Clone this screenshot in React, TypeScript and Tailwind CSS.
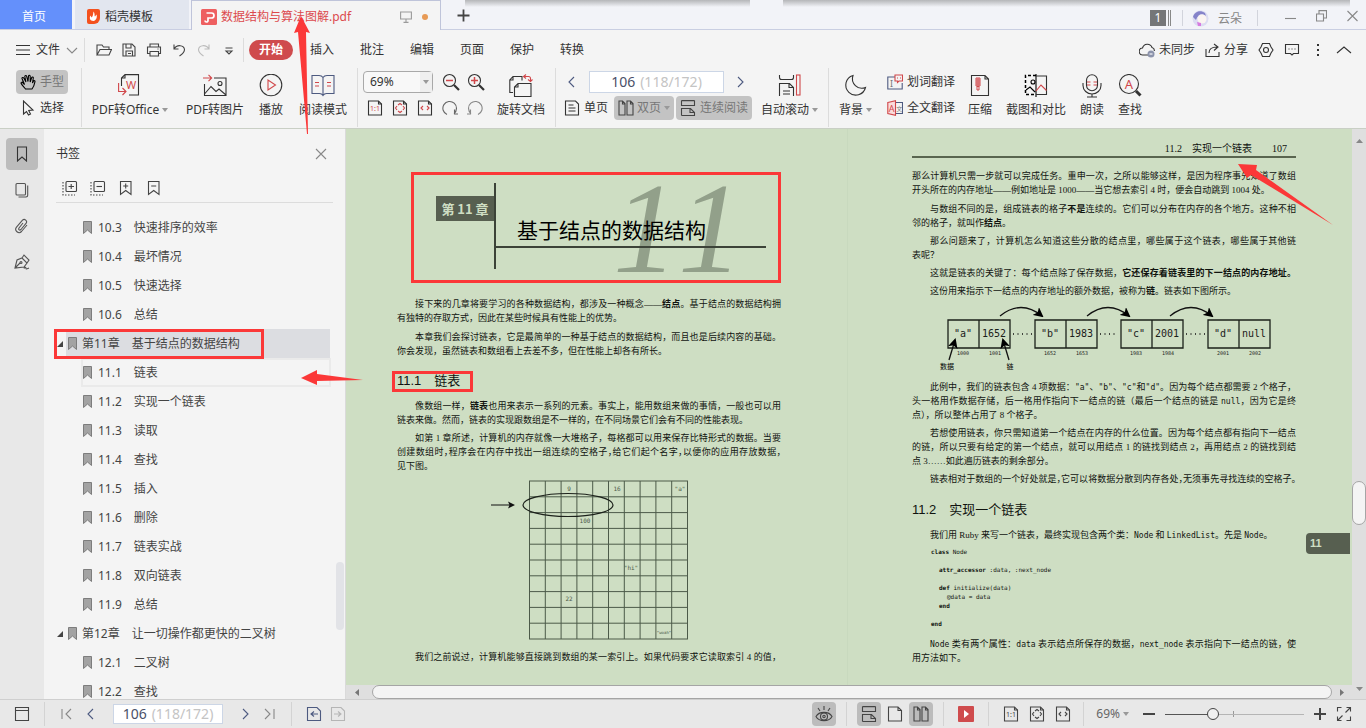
import type { ReactNode } from "react";

type IconProps = { w?: number; h?: number; className?: string; children: ReactNode };

function Icon({ w = 16, h = 16, className = "", children }: IconProps) {
  return (
    <svg
      width={w}
      height={h}
      viewBox={`0 0 ${w} ${h}`}
      fill="none"
      stroke="currentColor"
      strokeWidth="1.1"
      className={`shrink-0 ${className}`}
      aria-hidden="true"
    >
      {children}
    </svg>
  );
}

const RED = "#d0474a";

const Caret = () => (
  <svg width="6" height="4" viewBox="0 0 6 4" className="ml-[3px] shrink-0" aria-hidden="true">
    <path d="M0 0h6L3 4z" fill="#999" />
  </svg>
);

const Chevron = ({ dir }: { dir: "left" | "right" | "up" | "down" }) => {
  const d = {
    left: "M10 3L5 8l5 5",
    right: "M6 3l5 5-5 5",
    up: "M1 11l7-6 7 6",
    down: "M3 6l5 5 5-5",
  }[dir];
  return (
    <Icon>
      <path d={d} />
    </Icon>
  );
};

const FitActual = ({ color = "currentColor" }: { color?: string }) => (
  <Icon>
    <path d="M1.500 1h10l3 3v11h-13z" />
    <path d="M11.500 1v3h3" />
    <text x="8" y="11" fontSize="7" textAnchor="middle" fill={color} stroke="none">
      1:1
    </text>
  </Icon>
);

const FitPage = ({ color = "currentColor" }: { color?: string }) => (
  <Icon>
    <path d="M1.500 1h10l3 3v11h-13z" />
    <path d="M11.500 1v3h3" />
    <path d="M6 5l2-1.500 2 1.500M6 11l2 1.500 2-1.500M5 6L3.500 8 5 10M11 6l1.500 2-1.500 2" stroke={color} />
  </Icon>
);

const FitWidth = ({ color = "currentColor" }: { color?: string }) => (
  <Icon>
    <path d="M1.500 1h10l3 3v11h-13z" />
    <path d="M11.500 1v3h3" />
    <path d="M6 6L4 8l2 2M10 6l2 2-2 2" stroke={color} />
  </Icon>
);

const Continuous = () => (
  <Icon>
    <path d="M1.500 .5v5h13v-5M1.500 .6h13M1.500 15.400V8.500h9l4 4v3h-13M10 8.500v4h4" />
  </Icon>
);

const TwoPages = () => (
  <Icon>
    <path d="M1 1h3.500L7 3.500V15H1zM9 1h3.500L15 3.500V15H9zM4.500 1v3H7M12.500 1v3H15" />
  </Icon>
);

const BookmarkGlyph = () => (
  <svg width="9" height="13" viewBox="0 0 9 13" className="shrink-0" aria-hidden="true">
    <path d="M.5 .5h8v12L4.500 9l-4 3.500z" fill="#a3a3a3" stroke="#7d7d7d" />
  </svg>
);

/* ---------- title bar ---------- */

function TitleBar() {
  return (
    <header className="relative flex h-[30px] shrink-0 border-b border-[#c9cee2] bg-[#f2f3f8]">
      <div className="absolute left-[465px] top-0 h-[7px] w-[285px] bg-linear-to-b from-[#b5b6b9] to-[#f2f3f8]" />
      <div className="absolute left-[783px] right-4 top-0 h-[7px] bg-linear-to-b from-[#b5b6b9] to-[#f2f3f8]" />
      <button className="w-18 bg-[#6490fb] pr-1 pt-1 text-white">首页</button>
      <button className="ml-[3px] flex w-[114px] items-center bg-[#e2e6ef] pl-3 pt-1">
        <svg width="13" height="15" viewBox="0 0 13 15" aria-hidden="true">
          <path d="M2 0h9a2 2 0 0 1 2 2v7a6 6 0 0 1-6 6H2a2 2 0 0 1-2-2V2a2 2 0 0 1 2-2z" fill="#f4511e" />
          <path d="M6.500 2.500c2 3 .5 4 1.500 5l1.500-2c1 3-.5 6-3 6.500C3 12 2 9 3.500 6.500l1 2c1.500-1 1.500-3 2-6z" fill="#fff" />
        </svg>
        <span className="ml-[5px]">稻壳模板</span>
      </button>
      <div className="-mb-px ml-0.5 flex w-[250px] items-center border-x border-t border-[#bfc4da] bg-[#f4f4f4] pl-[9px] pt-0.5 text-[#dc4a4d]">
        <svg width="16" height="16" viewBox="0 0 16 16" aria-hidden="true">
          <rect width="16" height="16" rx="1.500" fill="#ee5f60" />
          <path d="M5.500 4h5a2.500 2.500 0 0 1 0 5H7v2.500a1.500 1.500 0 1 1-3 0" fill="none" stroke="#fff" strokeWidth="1.700" />
        </svg>
        <span className="ml-1">数据结构与算法图解.pdf</span>
        <Icon w={12} h={12} className="ml-auto text-[#9a9a9a]">
          <path d="M.6 1h10.800v7H.6zM6 8v3M3.500 11.400h5" />
        </Icon>
        <span className="ml-2.5 mr-3 size-[6px] rounded-full bg-[#e79a55]" />
      </div>
      <button aria-label="新建" className="ml-4 pt-0.5 text-[#444]">
        <Icon w={13} h={13}>
          <path d="M6.500 .5v12M.5 6.500h12" strokeWidth="1.800" />
        </Icon>
      </button>
      <div className="ml-auto mt-2 flex h-5 items-center text-[#888]">
        <span className="flex size-4 items-center justify-center bg-[#757678] text-white">1</span>
        <span className="ml-0.5 h-4 w-[3px] border-x border-[#888]" />
        <span className="ml-[11px] h-4 w-px bg-[#d2d4dc]" />
        <svg width="17" height="17" viewBox="0 0 17 17" className="ml-[9px]" aria-hidden="true">
          <circle cx="8.500" cy="8.500" r="8" fill="#dcdcf2" />
          <path d="M1 7c1-5 7-8 12-4l1 3c-4-3-8-2-10 4z" fill="#8583c9" />
          <circle cx="10" cy="9" r="4.500" fill="#fbf4f1" />
          <path d="M5 12l4 1v3H6z" fill="#d77be0" />
        </svg>
        <span className="ml-[9px] pt-0.5">云朵</span>
        <span className="ml-[15px] h-4 w-px bg-[#d2d4dc]" />
        <button aria-label="最小化" className="ml-[27px]">
          <Icon w={11} h={12}><path d="M0 6.500h11" /></Icon>
        </button>
        <button aria-label="还原" className="ml-5 pb-1">
          <Icon w={11} h={12}><path d="M.5 4h7v7h-7zM3 4V.6h7.500V8H7.500" /></Icon>
        </button>
        <button aria-label="关闭" className="ml-5 mr-2 pb-1">
          <Icon w={11} h={12}><path d="M.5 1l10 10M10.500 1l-10 10" /></Icon>
        </button>
      </div>
    </header>
  );
}

/* ---------- menu row ---------- */

const quickIcons: { name: string; icon: ReactNode }[] = [
  { name: "打开", icon: <path d="M1 13V3h5l1.500 2H13v2.500M1 13h12l2.500-5.500H4z" /> },
  { name: "保存", icon: <path d="M2 2h9l3 3v9H2zM5 2v4h5V2M5 14V9h6.500v5M7 11.500h3" /> },
  { name: "打印", icon: <path d="M4 5V2h8.500v3M4 11.500H1.500V5h13v6.500H12.500M4 9.500h8.500V14H4zM11.500 7h1" /> },
  { name: "撤销", icon: <path d="M3 2.500v4.500h4.500M3 7c3-5 10-4 10.500.5 0 3-2 4.500-5 6.500" /> },
  { name: "恢复", icon: <path d="M13 2.500v4.500H8.500M13 7C10 2 3 3 2.500 7.500c0 3 2 4.500 5 6.500" stroke="#bbb" /> },
  { name: "更多", icon: <path d="M4.500 6h7M5 9l3 3 3-3z" /> },
];

const menus = ["插入", "批注", "编辑", "页面", "保护", "转换"];

function MenuRow() {
  return (
    <nav className="flex h-9 shrink-0 items-center pl-4 pt-[3px] text-[#333]">
      <button className="flex items-center">
        <Icon w={14} h={12}><path d="M0 1.500h14M0 6h14M0 10.500h14" /></Icon>
        <span className="ml-1.5">文件</span>
        <span className="ml-1 text-[#888]"><Chevron dir="down" /></span>
      </button>
      <span className="mx-1 h-6 w-px bg-[#dcdcdc]" />
      <div className="ml-0.5 flex">
        {quickIcons.map((q) => (
          <button key={q.name} aria-label={q.name} className="flex w-[25px] justify-center text-[#444]">
            <Icon>{q.icon}</Icon>
          </button>
        ))}
      </div>
      <span className="ml-0.5 mr-1 h-6 w-px bg-[#dcdcdc]" />
      <button className="ml-px h-5 w-11 rounded-full bg-[#cf4b4d] font-bold text-white">开始</button>
      <div className="ml-1 flex">
        {menus.map((m) => (
          <button key={m} className="w-[50px]">{m}</button>
        ))}
      </div>
      <div className="ml-auto flex items-center pr-[14px]">
        <button className="flex items-center">
          <Icon>
            <path d="M9 13H4a3.500 3.500 0 0 1-.5-7 5 5 0 0 1 9.500-.5c2 .5 2.500 2 2.300 3.500" />
            <circle cx="12" cy="12" r="3.500" fill="#8c93ab" stroke="none" />
            <path d="M10.500 12h3" stroke="#fff" />
          </Icon>
          <span className="ml-1">未同步</span>
        </button>
        <button className="ml-2.5 flex items-center">
          <Icon><path d="M1 7v7.500h13V10M4 11c0-4 3-6 8-6M9 2l4 3-4 3.500" /></Icon>
          <span className="ml-[3px]">分享</span>
        </button>
        <button aria-label="设置" className="ml-2.5">
          <Icon><path d="M4.500 1.500h7L13 5l2 3-2 3-1.500 3.500h-7L3 11 1 8l2-3z" /><circle cx="8" cy="8" r="2.500" /></Icon>
        </button>
        <button aria-label="反馈" className="ml-2.5">
          <Icon><path d="M1.500 2.500h13v9h-5L8 13l-1.500-1.500h-5z" /><path d="M4.500 7h1M7.500 7h1M10.500 7h1" /></Icon>
        </button>
        <button aria-label="更多选项" className="ml-2.5">
          <Icon><path d="M8 2v2M8 7v2M8 12v2" strokeWidth="2" /></Icon>
        </button>
        <button aria-label="收起" className="ml-2.5"><Chevron dir="up" /></button>
      </div>
    </nav>
  );
}

/* ---------- ribbon ---------- */

function BigButton({ label, icon, className, caret }: { label: string; icon: ReactNode; className: string; caret?: boolean }) {
  return (
    <button className={`mt-2 flex h-12 shrink-0 flex-col items-center whitespace-nowrap ${className}`}>
      <Icon w={24} h={24}>{icon}</Icon>
      <span className="mt-1 flex items-center leading-4">
        {label}
        {caret && <Caret />}
      </span>
    </button>
  );
}

const Rule = ({ className }: { className: string }) => <span className={`mt-0.5 h-[59px] w-px shrink-0 bg-[#dcdcdc] ${className}`} />;

function PageNumber({ className, id }: { className: string; id: string }) {
  return (
    <label htmlFor={id} className={`flex items-center justify-center border border-[#ccd6e6] bg-white text-sm text-[#c4c4c4] ${className}`}>
      <input id={id} defaultValue="106" aria-label="页码" className="mr-1 w-[25px] text-[#4a5068] outline-none" />
      (118/172)
    </label>
  );
}

function Ribbon() {
  return (
    <section className="flex h-[63px] shrink-0 items-start border-b border-[#c9cfc5] pl-4 text-[#333]">
      <div className="mt-1 flex w-[52px] flex-col gap-0.5">
        <button className="flex h-6 items-center gap-1 rounded bg-[#c3c3c3] pl-1 text-[#777]">
          <Icon className="text-black">
            <path d="M5.500 15c-1-1.500-4-4-4.500-6 0-1 1.500-1.200 2 0L4.500 10.500 2 4.500c-.3-1 1.300-1.500 1.800-.5L6 8 4.800 2.500c0-1.200 1.500-1.300 1.800-.3L8 7.500l.5-5.500c.2-1 1.700-.9 1.700.2L10.200 8l1.500-4.500c.5-1 1.800-.5 1.600.5L12.500 9l1-2c.6-.8 1.700-.3 1.500.6-.5 2.500-1 5-3 7.400z" />
          </Icon>
          手型
        </button>
        <button className="flex h-6 items-center gap-1 pl-1">
          <Icon><path d="M3.500 1v13l3-2.500L8.500 15l2-1-1.800-3.500L13 10z" /></Icon>
          选择
        </button>
      </div>
      <Rule className="ml-[13px]" />
      <BigButton
        label="PDF转Office"
        caret
        className="ml-2.5 w-19"
        icon={
          <>
            <path d="M3.500 12V4L7 .6h13.500V21H11M7 .6V4H3.500" />
            <path d="M.6 9v8.500H8M4.500 14L8 17.500 4.500 21" stroke={RED} />
            <text x="13" y="15" fontSize="11" textAnchor="middle" fill={RED} stroke="none">W</text>
          </>
        }
      />
      <BigButton
        label="PDF转图片"
        className="ml-[18px] w-[58px]"
        icon={
          <>
            <path d="M11 4h12v17.500H1.500V10M1.500 20L8 12.500l5 5 3-2.500 7 6" />
            <circle cx="17" cy="9.500" r="2" />
            <path d="M0 4h8.500M5.500 .8L8.700 4 5.500 7.200" stroke={RED} />
          </>
        }
      />
      <BigButton
        label="播放"
        className="ml-[15px] w-6"
        icon={
          <>
            <circle cx="12" cy="11" r="10.800" />
            <path d="M9 6v10l7.500-5z" stroke={RED} />
          </>
        }
      />
      <BigButton
        label="阅读模式"
        className="ml-4 w-12"
        icon={
          <>
            <path d="M12 3.500C11 2 9 1.500 8 1.500H1v18h7.500c1.500 0 2.500.5 3.500 2 1-1.500 2-2 3.500-2H23v-18h-7c-1 0-3 .5-4 2zM12 3.500v18" stroke="#4d5a80" />
            <path d="M4 8.500h4M4 12h4M16 8.500h4M16 12h4" stroke={RED} />
          </>
        }
      />
      <Rule className="ml-2.5" />
      <div className="ml-[5px] mt-[5px] w-[122px]">
        <div className="flex items-center">
          <div className="relative">
            <select aria-label="缩放" className="h-[22px] w-[70px] appearance-none rounded border border-[#a9a9a9] bg-[#f8f8f8] pl-1.5 text-[#333]">
              <option>69%</option>
            </select>
            <span className="pointer-events-none absolute inset-y-px right-px flex w-3 items-center bg-[#efefef]"><Caret /></span>
          </div>
          <button aria-label="缩小" className="ml-[9px]">
            <Icon w={18} h={18}>
              <circle cx="7.500" cy="7.500" r="6" /><path d="M12 12l5 5" strokeWidth="2.200" /><path d="M4 7.500h7" stroke={RED} strokeWidth="1.500" />
            </Icon>
          </button>
          <button aria-label="放大" className="ml-[7px]">
            <Icon w={18} h={18}>
              <circle cx="7.500" cy="7.500" r="6" /><path d="M12 12l5 5" strokeWidth="2.200" /><path d="M4 7.500h7M7.500 4v7" stroke={RED} strokeWidth="1.500" />
            </Icon>
          </button>
        </div>
        <div className="ml-1 mt-[7px] flex gap-[9px]">
          <button aria-label="实际大小"><FitActual color={RED} /></button>
          <button aria-label="适合页面"><FitPage color={RED} /></button>
          <button aria-label="适合宽度"><FitWidth color={RED} /></button>
          <button aria-label="顺时针旋转" className="text-[#666]"><Icon><path d="M5 14.500A6.800 6.800 0 1 1 12 13.500M12.500 9.500v4.500h3.500" /></Icon></button>
          <button aria-label="逆时针旋转" className="text-[#888]"><Icon><path d="M11 14.500A6.800 6.800 0 1 0 4 13.500M3.500 9.500v4.500H0" /></Icon></button>
        </div>
      </div>
      <BigButton
        label="旋转文档"
        className="ml-3 w-12"
        icon={
          <>
            <path d="M4 18.500H.8V6L4 2.500h9V6.500M4 2.500V6H.8" />
            <path d="M5.500 22.500h16.500V9.500H9L5.500 13zM9 9.500V13H5.500" />
            <path d="M15 2.500h4.500c1.500 0 2 1 2 2v3M17 .5l-2.500 2L17 4.500M19 5.500l2.500 2 2-2" stroke={RED} />
          </>
        }
      />
      <Rule className="ml-2.5" />
      <div className="ml-2 mt-[5px] w-[188px]">
        <div className="flex items-center text-[#4d5a80]">
          <button aria-label="上一页"><Chevron dir="left" /></button>
          <PageNumber id="page-top" className="ml-[9px] h-[22px] w-[135px]" />
          <button aria-label="下一页" className="ml-2"><Chevron dir="right" /></button>
        </div>
        <div className="mt-[3px] flex h-6 items-center">
          <button className="flex h-6 items-center gap-1 whitespace-nowrap">
            <Icon><path d="M1.500 1h10l3 3v11h-13zM4.500 5h5M4.500 8h7M4.500 11h7" /></Icon>
            单页
          </button>
          <button className="ml-1.5 flex h-6 shrink-0 items-center rounded bg-[#c3c3c3] px-1 text-[#777]">
            <span className="mr-[3px] text-[#444]"><TwoPages /></span>
            双页
            <Caret />
          </button>
          <button className="ml-0.5 flex h-6 shrink-0 items-center rounded bg-[#c3c3c3] px-1 text-[#777]">
            <span className="mr-1 text-[#444]"><Continuous /></span>
            连续阅读
          </button>
        </div>
      </div>
      <BigButton
        label="自动滚动"
        caret
        className="ml-[9px] w-[57px]"
        icon={
          <>
            <path d="M1.500 1v2.500c0 1.500 1 2 2 2h10c1 0 2-.5 2-2V1M1.500 22V9.500h10l4 4V22M11 9.500v4h4.500M5 17h7M5 20h7" />
            <rect x="18.500" y="1" width="3.500" height="20" stroke={RED} />
          </>
        }
      />
      <Rule className="ml-2.5" />
      <BigButton label="背景" caret className="ml-2.5 w-[33px]" icon={<path d="M9 1.500A10 10 0 1 0 21.500 13.500 9.500 9.500 0 0 1 9 1.500z" />} />
      <div className="ml-[15px] mt-1 flex flex-col gap-0.5 whitespace-nowrap">
        <button className="flex h-6 items-center gap-1">
          <Icon>
            <path d="M8 3H.8v12h14.400V9" stroke="#4d5a80" />
            <text x="4.500" y="12.500" fontSize="9" textAnchor="middle" fill="#777" stroke="none">I</text>
            <path d="M8 1h7.500v6H12l-1.500 1.500V7H8zM10 4h1M13 4h1" stroke={RED} />
          </Icon>
          划词翻译
        </button>
        <button className="flex h-6 items-center gap-1">
          <Icon>
            <path d="M9 2.500h6.500v11H9" stroke="#4d5a80" />
            <path d="M.8 2.500L8.500 .8v14.500L.8 13.500z" stroke={RED} fill="#fbdcdc" />
            <text x="4.700" y="11.500" fontSize="9" textAnchor="middle" fill={RED} stroke="none">A</text>
            <text x="12.300" y="11" fontSize="6" textAnchor="middle" fill="#777" stroke="none">文</text>
          </Icon>
          全文翻译
        </button>
      </div>
      <BigButton
        label="压缩"
        className="ml-[13px] w-6"
        icon={
          <>
            <path d="M3.500 1.500h13.500L20.500 5v16.500h-17zM17 1.500V5h3.500" />
            <path d="M8 4h4v8H8zM8 6h4M8 8h4M8 10h4M10 4v8M9 12.500h2V16H9z" stroke={RED} strokeWidth="1" />
          </>
        }
      />
      <BigButton
        label="截图和对比"
        className="ml-[14px] w-15"
        icon={
          <>
            <path d="M12 1.500H1.500v19H12" strokeDasharray="3 2" stroke="#000" strokeWidth="1.500" />
            <path d="M2 16l4-3 5 5M12 0v23" stroke="#000" />
            <circle cx="9" cy="8" r="2" stroke="#000" />
            <path d="M12 2h10.500v18.500H12" />
            <path d="M12 17l5-6 5.500 5.500" stroke={RED} />
          </>
        }
      />
      <BigButton
        label="朗读"
        className="ml-[14px] w-6"
        icon={
          <>
            <rect x="6.500" y=".8" width="11" height="16" rx="5.500" />
            <path d="M3 9v2.500a9 8.500 0 0 0 18 0V9M12 20v3M7 23h10" />
            <path d="M7 8h3.500M7 11h3.500M13.500 8H17M13.500 11H17" stroke={RED} />
          </>
        }
      />
      <BigButton
        label="查找"
        className="ml-[14px] w-6"
        icon={
          <>
            <circle cx="11" cy="10" r="9.500" />
            <path d="M18 17l4.500 4.500" strokeWidth="3" />
            <text x="11" y="14.500" fontSize="13" textAnchor="middle" fill={RED} stroke="none">A</text>
          </>
        }
      />
    </section>
  );
}

/* ---------- bookmarks ---------- */

const bookmarks = [
  { text: "10.3　快速排序的效率" },
  { text: "10.4　最坏情况" },
  { text: "10.5　快速选择" },
  { text: "10.6　总结" },
  { text: "第11章　基于结点的数据结构", chapter: true, selected: true },
  { text: "11.1　链表", hover: true },
  { text: "11.2　实现一个链表" },
  { text: "11.3　读取" },
  { text: "11.4　查找" },
  { text: "11.5　插入" },
  { text: "11.6　删除" },
  { text: "11.7　链表实战" },
  { text: "11.8　双向链表" },
  { text: "11.9　总结" },
  { text: "第12章　让一切操作都更快的二叉树", chapter: true },
  { text: "12.1　二叉树" },
  { text: "12.2　查找" },
];

function Sidebar() {
  return (
    <>
      <aside className="flex w-11 shrink-0 flex-col items-center bg-[#e8e8e8] pt-[9px] text-[#555]">
        <button aria-label="书签" className="flex size-8 items-center justify-center rounded bg-[#bcbcbc] text-[#333]">
          <Icon><path d="M3.500 1h9v14L8 11l-4.500 4z" /></Icon>
        </button>
        <button aria-label="缩略图" className="flex h-9 items-center pt-1">
          <Icon><rect x="2" y="1.500" width="9.500" height="11.500" rx="1" /><path d="M4.500 15H12c1 0 1.700-.7 1.700-1.700V3.500" /></Icon>
        </button>
        <button aria-label="附件" className="flex h-9 items-center pt-1">
          <Icon><path d="M13 7l-5.500 6.500a3.300 3.300 0 0 1-5-4.300L8.500 2.200a2.400 2.400 0 0 1 3.700 3L7 11.500c-1.300 1.300-3 .2-2-1.500L9 5" /></Icon>
        </button>
        <button aria-label="签名" className="flex h-9 items-center pt-1">
          <Icon><path d="M1 14l2-8 5-2 5 5-3 4zM8 4l2-3 5 5-2 3M1 14l5-5M10 14.500c1-2 2-1 2 0s2 0 3-.5" /><circle cx="7" cy="8.500" r="1" /></Icon>
        </button>
      </aside>
      <section className="relative w-[302px] shrink-0 overflow-hidden border-r border-[#dadada] bg-[#f4f4f4]">
        <div className="flex h-12 items-center justify-between pl-3 pr-[18px] pt-px text-[#333]">
          <h2>书签</h2>
          <button aria-label="关闭书签" className="text-[#888]">
            <Icon w={12} h={12}><path d="M1 1l10 10M11 1L1 11" /></Icon>
          </button>
        </div>
        <div className="mx-3 flex h-[26px] items-start gap-3 border-b border-[#dcdcdc] pl-1.5 pt-[3px] text-[#444]">
          <button aria-label="展开"><Icon><path d="M1 2v13h12" strokeDasharray="1.500 1.500" /><rect x="4" y="1.500" width="10.500" height="10" rx="1" /><path d="M6.500 6.500h5.500M9.200 4v5" /></Icon></button>
          <button aria-label="折叠"><Icon><path d="M1 2v13h12" strokeDasharray="1.500 1.500" /><rect x="4" y="1.500" width="10.500" height="10" rx="1" /><path d="M6.500 6.500h5.500" /></Icon></button>
          <button aria-label="添加书签"><Icon><path d="M2.500 1.500h10.500v13L7.700 10.500 2.500 14.500zM5.200 6h5M7.700 3.500v5" /></Icon></button>
          <button aria-label="删除书签"><Icon><path d="M2.500 1.500h10.500v13L7.700 10.500 2.500 14.500zM5.200 6h5" /></Icon></button>
        </div>
        <ul className="mt-2.5 text-[#444]">
          {bookmarks.map((b) =>
            b.chapter ? (
              <li key={b.text} className="relative flex h-[29px] items-center pl-[13px] pr-[15px]">
                <svg width="6" height="6" viewBox="0 0 6 6" className="shrink-0" aria-hidden="true"><path d="M6 0v6H0z" fill="#444" /></svg>
                <a href="#chapter" className={`ml-[3px] flex h-full flex-1 items-center gap-[5px] pl-0.5 ${b.selected ? "bg-[#dcdde1]" : ""}`}>
                  <BookmarkGlyph />
                  {b.text}
                </a>
                {b.selected && <span className="absolute left-2.5 top-0 h-[30px] w-[210px] border-3 border-[#fb3838]" />}
              </li>
            ) : (
              <li key={b.text} className={`ml-[37px] mr-3.5 h-[29px] border-2 ${b.hover ? "border-[#eaeaea]" : "border-transparent"}`}>
                <a href="#section" className="flex h-full items-center gap-1.5">
                  <BookmarkGlyph />
                  {b.text}
                </a>
              </li>
            ),
          )}
        </ul>
        <div className="absolute right-px top-[433px] h-[68px] w-2 rounded-full bg-[#e2e3e7]" />
      </section>
    </>
  );
}

/* ---------- document pages ---------- */

// full: the line runs to the right margin; tight: half-width punctuation
function Line({ children, full, tight, indent }: { children: ReactNode; full?: boolean; tight?: boolean; indent?: boolean }) {
  return (
    <span
      className={`block whitespace-nowrap ${indent ? "pl-[18px]" : ""} ${full ? "[text-align-last:justify]" : ""} ${tight ? "[font-feature-settings:'halt']" : ""}`}
    >
      {children}
    </span>
  );
}

const Code = ({ children }: { children: ReactNode }) => (
  <code className="font-['DejaVu_Sans_Mono',monospace] text-[8px] leading-none">{children}</code>
);

function MemoryGrid() {
  const ticks = Array.from({ length: 11 }, (_, i) => i * 15.8 + 40.5);
  const cells = [
    { x: 80, y: 11, t: "9" },
    { x: 128, y: 11, t: "16" },
    { x: 191, y: 11, t: '"a"' },
    { x: 96, y: 43, t: "100" },
    { x: 142, y: 90, t: '"hi"' },
    { x: 80, y: 121, t: "22" },
    { x: 175, y: 154, t: '"woah"' },
  ];
  return (
    <svg width="201" height="160" viewBox="0 0 201 160" className="ml-[92px] mt-[7px]" role="img" aria-label="内存格子">
      <g stroke="#4c5a49" strokeWidth="1">
        {ticks.map((t) => (
          <path key={t} d={`M${t} 1V159M40 ${t - 39.5}H199`} />
        ))}
      </g>
      <ellipse cx="79" cy="25" rx="45" ry="11.500" fill="none" stroke="#1c211b" strokeWidth="1.200" />
      <path d="M2 25h20" stroke="#111" />
      <path d="M26 25l-7-3.500 1.500 3.500-1.500 3.500z" fill="#111" />
      {cells.map((c) => (
        <text key={c.t} x={c.x} y={c.y} textAnchor="middle" fill="#4c5a49" className={`font-['DejaVu_Sans_Mono',monospace] ${c.t.length > 4 ? "text-[4px]" : "text-[6px]"}`}>
          {c.t}
        </text>
      ))}
    </svg>
  );
}

const nodes = [
  { x: 11, data: '"a"', link: "1652", a: "1000", b: "1001" },
  { x: 98, data: '"b"', link: "1983", a: "1652", b: "1653" },
  { x: 184, data: '"c"', link: "2001", a: "1983", b: "1984" },
  { x: 271, data: '"d"', link: "null", a: "2001", b: "2002" },
];

function LinkedListFigure() {
  return (
    <svg width="340" height="70" viewBox="0 0 340 70" className="ml-[25px]" role="img" aria-label="链表">
      <defs>
        <marker id="head" viewBox="0 0 10 10" refX="8" refY="5" markerWidth="10" markerHeight="10" markerUnits="userSpaceOnUse" orient="auto">
          <path d="M0 0l10 5-10 5 2.500-5z" />
        </marker>
      </defs>
      {nodes.map((n) => (
        <g key={n.data} className="font-['DejaVu_Sans_Mono',monospace]" fill="#1b201a">
          <path d={`M${n.x} 18h62v28h-62zM${n.x + 31} 18v28`} fill="none" stroke="#1b201a" strokeWidth="1.300" />
          <text x={n.x + 15} y="35" textAnchor="middle" className="text-[10px]">{n.data}</text>
          <text x={n.x + 46} y="35" textAnchor="middle" className="text-[10px]">{n.link}</text>
          <text x={n.x + 15} y="53" textAnchor="middle" className="text-[5px]">{n.a}</text>
          <text x={n.x + 47} y="53" textAnchor="middle" className="text-[5px]">{n.b}</text>
        </g>
      ))}
      <g fill="none" stroke="#111" strokeWidth="1.300">
        <path d="M76 32h19M163 32h18M249 32h19" strokeDasharray="1 3.500" />
        <path d="M63 14Q84-3 105 14" markerEnd="url(#head)" />
        <path d="M150 14Q171-3 192 14" markerEnd="url(#head)" />
        <path d="M233 14Q254-3 275 14" markerEnd="url(#head)" />
        <path d="M12 58l6-20" markerEnd="url(#head)" />
        <path d="M72 58l-6-20" markerEnd="url(#head)" />
      </g>
      <text x="10" y="67" textAnchor="middle" className="text-[7px]">数据</text>
      <text x="73" y="67" textAnchor="middle" className="text-[7px]">链</text>
    </svg>
  );
}

// one entry per source line: indent step, keyword, rest
const rubyLines = [
  { keyword: "class", rest: " Node" },
  {},
  { indent: "pl-2", keyword: "attr_accessor", rest: " :data, :next_node" },
  {},
  { indent: "pl-2", keyword: "def", rest: " initialize(data)" },
  { indent: "pl-4", rest: "@data = data" },
  { indent: "pl-2", keyword: "end" },
  {},
  { keyword: "end" },
];

const pageText = "w-[384px] font-['Liberation_Serif','Noto_Sans_CJK_SC',serif] text-[9px] leading-[14px] text-[#10130f]";
const heading = "font-['Liberation_Sans','Noto_Sans_CJK_SC',sans-serif] text-[13px] leading-5";

function LeftPage() {
  return (
    <article className="min-w-[502px] flex-1 border-r border-[#c8d9be] pl-[51px] pt-[43px]">
      <div className={pageText}>
        <div className="relative ml-[14px] flex h-[111px] w-[370px] border-3 border-[#fb3838] font-['Noto_Sans_CJK_SC',sans-serif]">
          <span className="absolute bottom-[-13px] left-[199px] font-['Liberation_Serif',serif] text-[130px] leading-[130px] text-[#92a08a] italic [font-kerning:none]">11</span>
          <div className="mt-2 h-[86px] w-[82px] border-r-2 border-[#3c4338]">
            <div className="ml-auto mt-[13px] h-[25px] w-[58px] bg-[#575f50] text-center text-[13px] leading-[25px] font-bold text-[#cedec3]">第 11 章</div>
          </div>
          <h1 className="relative mt-2 h-[65px] w-[270px] border-b-2 border-[#3c4338] pl-[21px] pt-8 text-[21px] leading-7 text-black">基于结点的数据结构</h1>
        </div>
        <p className="mt-[14px]">
          <Line indent full>接下来的几章将要学习的各种数据结构，都涉及一种概念——<b>结点</b>。基于结点的数据结构拥</Line>
          <Line>有独特的存取方式，因此在某些时候具有性能上的优势。</Line>
        </p>
        <p className="mt-[5px]">
          <Line indent full>本章我们会探讨链表，它是最简单的一种基于结点的数据结构，而且也是后续内容的基础。</Line>
          <Line>你会发现，虽然链表和数组看上去差不多，但在性能上却各有所长。</Line>
        </p>
        <h2 className={`relative mt-[13px] ${heading}`}>
          11.1　链表
          <span className="absolute -left-[5px] top-0 h-[21px] w-[81px] border-3 border-[#fb3838]" />
        </h2>
        <p className="mt-2">
          <Line indent full>像数组一样，<b>链表</b>也用来表示一系列的元素。事实上，能用数组来做的事情，一般也可以用</Line>
          <Line>链表来做。然而，链表的实现跟数组是不一样的，在不同场景它们会有不同的性能表现。</Line>
        </p>
        <p className="mt-1">
          <Line indent full>如第 1 章所述，计算机的内存就像一大堆格子，每格都可以用来保存比特形式的数据。当要</Line>
          <Line full tight>创建数组时，程序会在内存中找出一组连续的空格子，给它们起个名字，以便你的应用存放数据，</Line>
          <Line>见下图。</Line>
        </p>
        <MemoryGrid />
        <p className="mt-2.5">
          <Line indent full>我们之前说过，计算机能够直接跳到数组的某一索引上。如果代码要求它读取索引 4 的值，</Line>
        </p>
      </div>
    </article>
  );
}

function RightPage() {
  return (
    <article className="relative min-w-[502px] flex-1 pl-16 pt-[13px]">
      <div className={pageText}>
        <div className="mb-[11px] flex justify-end gap-5 border-b-2 border-[#59654f] pr-[9px] text-[10px]">
          <span>11.2　实现一个链表</span>
          <span>107</span>
        </div>
        <p>
          <Line full>那么计算机只需一步就可以完成任务。重申一次，之所以能够这样，是因为程序事先知道了数组</Line>
          <Line>开头所在的内存地址——例如地址是 1000——当它想去索引 4 时，便会自动跳到 1004 处。</Line>
        </p>
        <p className="mt-[5px]">
          <Line indent full>与数组不同的是，组成链表的格子<b>不是</b>连续的。它们可以分布在内存的各个地方。这种不相</Line>
          <Line>邻的格子，就叫作<b>结点</b>。</Line>
        </p>
        <p className="mt-1">
          <Line indent full>那么问题来了，计算机怎么知道这些分散的结点里，哪些属于这个链表，哪些属于其他链</Line>
          <Line>表呢？</Line>
        </p>
        <p className="mt-1">
          <Line indent full>这就是链表的关键了：每个结点除了保存数据，<b>它还保存着链表里的下一结点的内存地址。</b></Line>
        </p>
        <p className="mb-1 mt-1">
          <Line indent>这份用来指示下一结点的内存地址的额外数据，被称为<b>链</b>。链表如下图所示。</Line>
        </p>
        <LinkedListFigure />
        <p className="mt-2">
          <Line indent full>此例中，我们的链表包含 4 项数据：<Code>"a"</Code>、<Code>"b"</Code>、<Code>"c"</Code>和<Code>"d"</Code>。因为每个结点都需要 2 个格子，</Line>
          <Line full>头一格用作数据存储，后一格用作指向下一结点的链（最后一个结点的链是 <Code>null</Code>，因为它是终</Line>
          <Line>点），所以整体占用了 8 个格子。</Line>
        </p>
        <p className="mt-1">
          <Line indent full>若想使用链表，你只需知道第一个结点在内存的什么位置。因为每个结点都有指向下一结点</Line>
          <Line full>的链，所以只要有给定的第一个结点，就可以用结点 1 的链找到结点 2，再用结点 2 的链找到结</Line>
          <Line>点 3……如此遍历链表的剩余部分。</Line>
        </p>
        <p className="mt-1">
          <Line indent full tight>链表相对于数组的一个好处就是，它可以将数据分散到内存各处，无须事先寻找连续的空格子。</Line>
        </p>
        <h2 className={`mt-[14px] ${heading}`}>11.2　实现一个链表</h2>
        <p className="mt-2">
          <Line indent>我们用 Ruby 来写一个链表，最终实现包含两个类：<Code>Node</Code> 和 <Code>LinkedList</Code>。先是 <Code>Node</Code>。</Line>
        </p>
        <div className="mb-[9px] mt-[5px] pl-[19px] font-['DejaVu_Sans_Mono',monospace] text-[6px] leading-[9px]">
          {rubyLines.map((l, i) => (
            <div key={i} className={`h-[9px] whitespace-pre ${l.indent ?? ""}`}>
              {l.keyword && <b>{l.keyword}</b>}
              {l.rest}
            </div>
          ))}
        </div>
        <p>
          <Line indent full><Code>Node</Code> 类有两个属性：<Code>data</Code> 表示结点所保存的数据，<Code>next_node</Code> 表示指向下一结点的链，使</Line>
          <Line>用方法如下。</Line>
        </p>
      </div>
      <div className="absolute right-0.5 top-[404px] h-[21px] w-11 rounded-l bg-[#575f50] pl-1 font-['Liberation_Sans',sans-serif] text-[11px] leading-[21px] font-bold text-[#cedec3]">11</div>
    </article>
  );
}

function DocumentView() {
  return (
    <main className="flex min-w-0 flex-1 bg-[#dfdfdf]">
      <div className="flex min-w-0 flex-1 flex-col">
        <div className="flex min-h-0 flex-1 overflow-hidden bg-[#cedec3]">
          <LeftPage />
          <RightPage />
        </div>
        <div className="flex h-[14px] shrink-0 items-center gap-3 pl-2">
          <svg width="4" height="7" viewBox="0 0 4 7" className="mx-px" aria-hidden="true"><path d="M4 0v7L0 3.500z" fill="#777" /></svg>
          <div className="h-[14px] flex-1 rounded-full border border-[#a5a5a5] bg-[#f4f4f4]" />
          <svg width="4" height="7" viewBox="0 0 4 7" className="-ml-1 mr-2" aria-hidden="true"><path d="M0 0v7l4-3.500z" fill="#777" /></svg>
        </div>
      </div>
      <div className="flex w-[14px] shrink-0 flex-col items-center py-2">
        <svg width="7" height="4" viewBox="0 0 7 4" className="mt-0.5" aria-hidden="true"><path d="M0 4h7L3.500 0z" fill="#888" /></svg>
        <div className="mt-[338px] h-11 w-full rounded-full border border-[#a5a5a5] bg-[#f4f4f4]" />
        <svg width="7" height="4" viewBox="0 0 7 4" className="mt-auto" aria-hidden="true"><path d="M0 0h7L3.500 4z" fill="#888" /></svg>
      </div>
    </main>
  );
}

/* ---------- status bar ---------- */

const Sep = ({ className }: { className: string }) => <span className={`h-6 w-px bg-[#d3d3d3] ${className}`} />;

function StatusBar() {
  return (
    <footer className="flex h-[29px] shrink-0 items-center border-t border-[#cfcfcf] bg-[#e8e8e8] text-[#444]">
      <button aria-label="侧边栏" className="ml-3.5"><Icon><path d="M1.500 1.500h13v13h-13zM1.500 4.500h13" /></Icon></button>
      <Sep className="ml-3.5" />
      <button aria-label="第一页" className="ml-3.5 text-[#888]"><Icon><path d="M3 3v10M12 3L7 8l5 5" /></Icon></button>
      <button aria-label="上一页" className="ml-2 text-[#4d5a80]"><Chevron dir="left" /></button>
      <PageNumber id="page-bottom" className="ml-3.5 h-5 w-[110px]" />
      <button aria-label="下一页" className="ml-3.5 text-[#4d5a80]"><Chevron dir="right" /></button>
      <button aria-label="最后一页" className="ml-2 text-[#888]"><Icon><path d="M13 3v10M4 3l5 5-5 5" /></Icon></button>
      <Sep className="ml-3.5" />
      <button aria-label="后退" className="ml-3.5 text-[#4d5a80]"><Icon><path d="M1.500 1.500h9.500l3.500 3.500v9.500h-13zM5 8h7M8 5.500L5 8l3 2.500" /></Icon></button>
      <button aria-label="前进" className="ml-2 text-[#b5b5b5]"><Icon><path d="M1.500 1.500h9.500l3.500 3.500v9.500h-13zM4 8h7M8 5.500L11 8l-3 2.500" /></Icon></button>

      <div className="ml-auto flex items-center">
        <button aria-label="护眼模式" className="flex size-6 items-center justify-center rounded bg-[#bcbcbc]">
          <Icon w={18} h={18}>
            <path d="M1 11.500c3-5.500 13-5.500 16 0-3 5.500-13 5.500-16 0zM9 1v4M3 3l2 3M15 3l-2 3" />
            <circle cx="9" cy="11.500" r="3.500" /><circle cx="9" cy="11.500" r="1.200" />
          </Icon>
        </button>
        <Sep className="ml-2.5 mr-2.5" />
        <button aria-label="连续" className="flex size-6 items-center justify-center rounded bg-[#bcbcbc]"><Continuous /></button>
        <button aria-label="单页" className="mx-1.5"><Icon><path d="M1.500 1h9.500l3.500 3.500V15h-13zM11 1v3.500h3.500" /></Icon></button>
        <button aria-label="双页" className="flex size-6 items-center justify-center rounded bg-[#bcbcbc]"><TwoPages /></button>
        <Sep className="ml-2.5 mr-3.5" />
        <button aria-label="播放">
          <svg width="16" height="16" viewBox="0 0 16 16" aria-hidden="true"><rect width="16" height="16" rx="1" fill="#cf4b4d" /><path d="M6 4v8l5-4z" fill="#fff" /></svg>
        </button>
        <Sep className="mx-3.5" />
        <div className="flex gap-2.5">
          <button aria-label="实际大小"><FitActual /></button>
          <button aria-label="适合页面"><FitPage /></button>
          <button aria-label="适合宽度"><FitWidth /></button>
        </div>
        <Sep className="mx-3" />
        <button className="flex items-center text-[#666]">
          69%
          <Caret />
        </button>
        <button aria-label="缩小" className="ml-3"><Icon><path d="M2 8h12" strokeWidth="2" /></Icon></button>
        <div className="relative ml-2 flex w-[139px] items-center">
          <span className="absolute left-[68px] h-1.5 w-px bg-[#999]" />
          <input
            type="range"
            aria-label="缩放比例"
            min="0"
            max="100"
            defaultValue="33"
            className="relative w-full appearance-none bg-transparent [&::-webkit-slider-runnable-track]:h-px [&::-webkit-slider-runnable-track]:bg-[linear-gradient(to_right,#555_34%,#b5b5b5_34%)] [&::-webkit-slider-thumb]:-mt-1.5 [&::-webkit-slider-thumb]:size-3 [&::-webkit-slider-thumb]:appearance-none [&::-webkit-slider-thumb]:rounded-full [&::-webkit-slider-thumb]:border [&::-webkit-slider-thumb]:border-[#444] [&::-webkit-slider-thumb]:bg-[#f0f0f0]"
          />
        </div>
        <button aria-label="放大" className="ml-2"><Icon><path d="M2 8h12M8 2v12" strokeWidth="2" /></Icon></button>
        <button aria-label="全屏" className="ml-2 mr-3.5"><Icon><path d="M1.500 5.500v-4h4M10.500 1.500h4v4M14.500 10.500v4h-4M5.500 14.500h-4v-4M9.500 6.500l5-5M6.500 9.500l-5 5" /></Icon></button>
      </div>
    </footer>
  );
}

export default function App() {
  return (
    <div className="relative flex h-screen flex-col overflow-hidden bg-[#f4f4f4] font-['Noto_Sans','Noto_Sans_CJK_SC',sans-serif] text-xs text-[#333]">
      <TitleBar />
      <MenuRow />
      <Ribbon />
      <div className="flex min-h-0 flex-1">
        <Sidebar />
        <DocumentView />
      </div>
      <StatusBar />
      {/* hand-drawn pointers over the window */}
      <svg className="pointer-events-none absolute left-0 top-0" width="1366" height="400" viewBox="0 0 1366 400" fill="#fb3838" aria-hidden="true">
        <path d="M301 16l9 17-4-1 2 102h-1l-9-102-4 1z" />
        <path d="M301 378l16-8v4l46 6-46 1v4z" />
        <path d="M1238 164l19 1-1 5 77 55-82-50-4 3z" />
      </svg>
    </div>
  );
}
